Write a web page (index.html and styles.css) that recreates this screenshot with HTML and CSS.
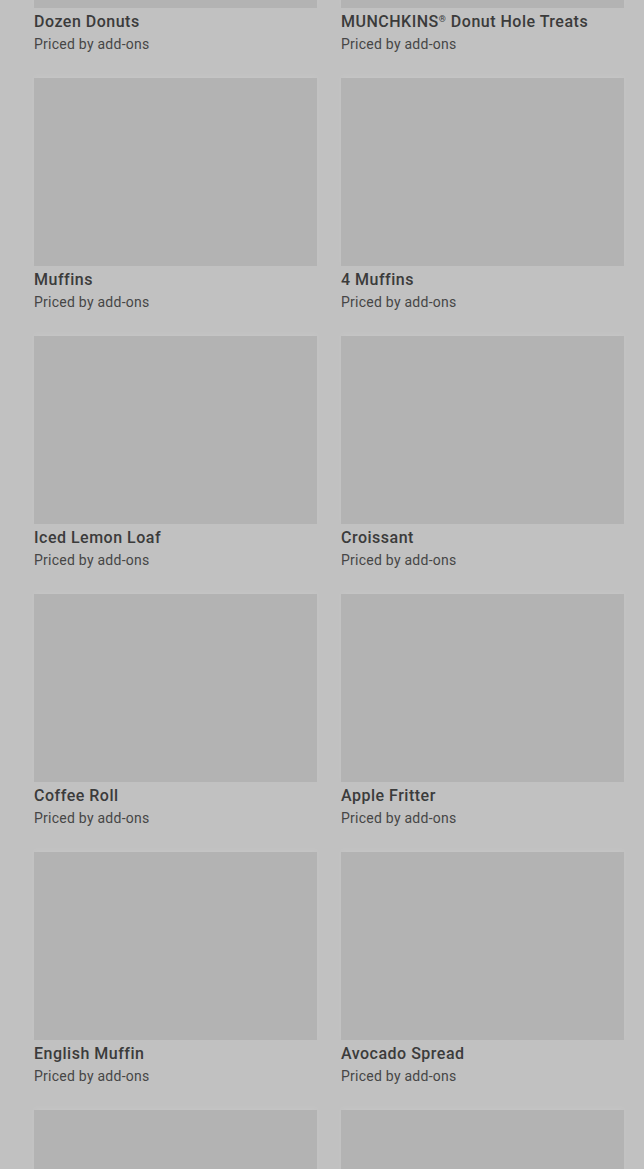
FILE: index.html
```html
<!DOCTYPE html>
<html lang="en">
<head>
    <meta charset="UTF-8">
    <meta name="viewport" content="width=device-width, initial-scale=1.0">
    <title>Menu</title>
    <link rel="stylesheet" href="styles.css">
</head>
<body>
    <div class="menu">
        <div class="item">
            <div class="photo"></div>
            <div class="name">Dozen Donuts</div>
            <div class="price">Priced by add-ons</div>
        </div>
        <div class="item">
            <div class="photo"></div>
            <div class="name">MUNCHKINS<sup class="reg">®</sup> Donut Hole Treats</div>
            <div class="price">Priced by add-ons</div>
        </div>

        <div class="item">
            <div class="photo"></div>
            <div class="name">Muffins</div>
            <div class="price">Priced by add-ons</div>
        </div>
        <div class="item">
            <div class="photo"></div>
            <div class="name">4 Muffins</div>
            <div class="price">Priced by add-ons</div>
        </div>

        <div class="item">
            <div class="photo"></div>
            <div class="name">Iced Lemon Loaf</div>
            <div class="price">Priced by add-ons</div>
        </div>
        <div class="item">
            <div class="photo"></div>
            <div class="name">Croissant</div>
            <div class="price">Priced by add-ons</div>
        </div>

        <div class="item">
            <div class="photo"></div>
            <div class="name">Coffee Roll</div>
            <div class="price">Priced by add-ons</div>
        </div>
        <div class="item">
            <div class="photo"></div>
            <div class="name">Apple Fritter</div>
            <div class="price">Priced by add-ons</div>
        </div>

        <div class="item">
            <div class="photo"></div>
            <div class="name">English Muffin</div>
            <div class="price">Priced by add-ons</div>
        </div>
        <div class="item">
            <div class="photo"></div>
            <div class="name">Avocado Spread</div>
            <div class="price">Priced by add-ons</div>
        </div>

        <!-- next row, only the photos are in view -->
        <div class="item">
            <div class="photo"></div>
        </div>
        <div class="item">
            <div class="photo"></div>
        </div>
    </div>
</body>
</html>
```

FILE: styles.css
```css
body {
    margin: 0;
    height: 1169px;
    overflow: hidden;
    background-color: #c1c1c1;
    font-family: Roboto, "Liberation Sans", sans-serif;
}

.menu {
    display: grid;
    grid-template-columns: 283px 283px;
    column-gap: 24px;
    row-gap: 24px;
    padding-left: 34px;
    margin-top: -180px;
}

.item {
    display: flex;
    flex-direction: column;
}

.photo {
    height: 188px;
    background-color: #b3b3b3;
    box-shadow: 0 -2px 6px rgba(255, 255, 255, 0.08);
}

.name {
    margin-top: 4px;
    font-size: 16px;
    line-height: 20px;
    font-weight: 500;
    letter-spacing: 0.5px;
    color: #3b3b3b;
}

.reg {
    font-size: 9px;
    line-height: 0;
    vertical-align: 5px;
}

.price {
    margin-top: 2px;
    font-size: 14px;
    line-height: 20px;
    letter-spacing: 0.25px;
    color: #464646;
}
```
